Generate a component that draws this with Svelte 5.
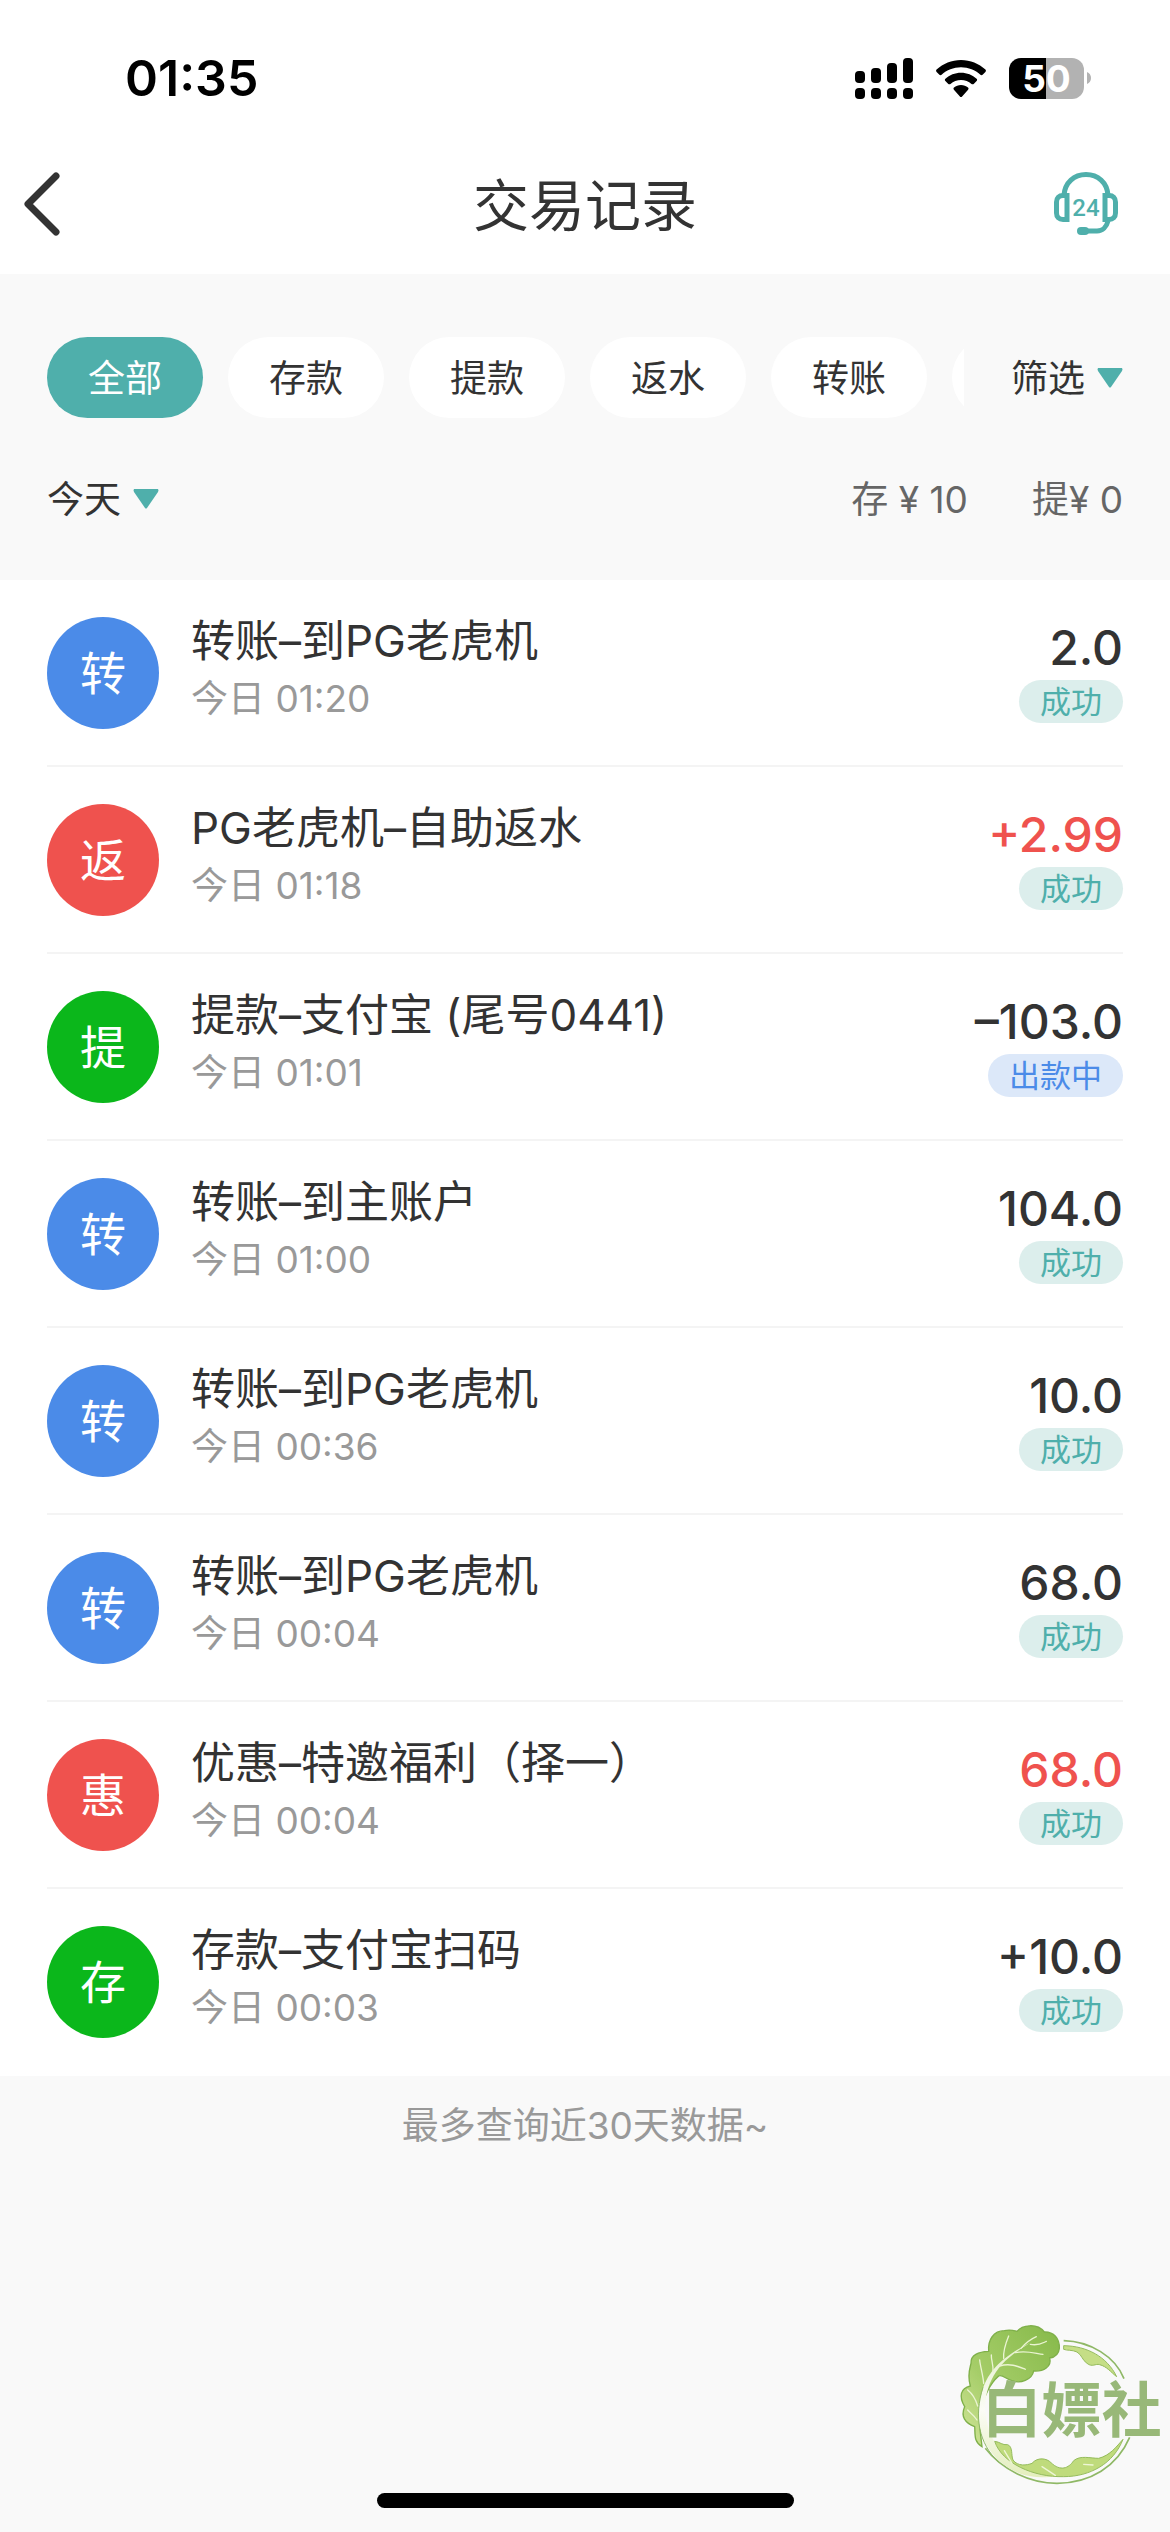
<script>
  const tabs = ["全部", "存款", "提款", "返水", "转账"];
  let activeTab = "全部";

  const records = [
    { icon: "转", color: "blue", title: "转账–到PG老虎机", time: "今日 01:20", amount: "2.0", status: "成功" },
    { icon: "返", color: "red", title: "PG老虎机–自助返水", time: "今日 01:18", amount: "+2.99", income: true, status: "成功" },
    { icon: "提", color: "green", title: "提款–支付宝 (尾号0441)", time: "今日 01:01", amount: "–103.0", status: "出款中", pending: true },
    { icon: "转", color: "blue", title: "转账–到主账户", time: "今日 01:00", amount: "104.0", status: "成功" },
    { icon: "转", color: "blue", title: "转账–到PG老虎机", time: "今日 00:36", amount: "10.0", status: "成功" },
    { icon: "转", color: "blue", title: "转账–到PG老虎机", time: "今日 00:04", amount: "68.0", status: "成功" },
    { icon: "惠", color: "red", title: "优惠–特邀福利（择一）", time: "今日 00:04", amount: "68.0", income: true, status: "成功" },
    { icon: "存", color: "green", title: "存款–支付宝扫码", time: "今日 00:03", amount: "+10.0", status: "成功" },
  ];
</script>

<div class="page">
  <header>
    <div class="status-bar">
      <span class="clock">01:35</span>
      <div class="status-icons">
        <svg width="58" height="41" viewBox="0 0 58 41">
          <rect x="0" y="13" width="10" height="12" rx="4" />
          <rect x="16" y="10" width="10" height="15" rx="4" />
          <rect x="32" y="5" width="10" height="20" rx="4" />
          <rect x="48" y="0" width="10" height="25" rx="4" />
          <rect x="0" y="30" width="10" height="11" rx="4" />
          <rect x="16" y="30" width="10" height="11" rx="4" />
          <rect x="32" y="30" width="10" height="11" rx="4" />
          <rect x="48" y="30" width="10" height="11" rx="4" />
        </svg>
        <svg width="50" height="37" viewBox="0 0 50 37">
          <path d="M25 0c9.400 0 17.900 3.600 24.400 9.600.7.600.7 1.600 0 2.300l-2.800 2.800c-.6.600-1.500.6-2.200 0C39.300 10 32.500 7.200 25 7.200S10.700 10 5.600 14.700c-.7.600-1.600.600-2.200 0L.6 11.900c-.7-.7-.7-1.700 0-2.300C7.100 3.600 15.600 0 25 0z" />
          <path d="M25 12.700c6 0 11.500 2.300 15.600 6 .7.700.7 1.600 0 2.300l-2.900 2.900c-.6.600-1.500.6-2.200 0-2.800-2.500-6.500-4-10.500-4s-7.700 1.500-10.500 4c-.7.600-1.600.6-2.200 0L9.400 21c-.7-.7-.7-1.600 0-2.300 4.100-3.700 9.600-6 15.600-6z" />
          <path d="M25 25c2.700 0 5.100.9 7 2.500.7.600.7 1.500.1 2.200l-6 6.700c-.6.700-1.600.7-2.200 0l-6-6.700c-.6-.7-.6-1.600.1-2.200 1.900-1.600 4.300-2.500 7-2.500z" />
        </svg>
        <div class="battery">
          <span class="level">50</span>
          <svg width="4" height="12" viewBox="0 0 4 12"><path d="M0 0c2.500 1 4 3.300 4 6s-1.500 5-4 6z" fill="#b2b2b2" /></svg>
        </div>
      </div>
    </div>

    <nav class="nav-bar">
      <button class="nav-button" aria-label="返回">
        <svg width="36" height="64" viewBox="0 0 36 64" fill="none" stroke="#333" stroke-width="7" stroke-linecap="round" stroke-linejoin="round">
          <path d="M32 4L4 32l28 28" />
        </svg>
      </button>
      <h1>交易记录</h1>
      <button class="nav-button service" aria-label="客服">
        <svg width="64" height="64" viewBox="0 0 64 64" fill="none" stroke="#4fafab" stroke-width="5">
          <path d="M10 23C11 10.500 20 2.500 32 2.500S53 10.500 54 23" />
          <path d="M13 23.500v24H9c-4 0-6.500-2.500-6.500-6.500V30c0-4 2.500-6.500 6.500-6.500z" />
          <path d="M51 23.500v24H55c4 0 6.500-2.500 6.500-6.500V30c0-4-2.500-6.500-6.500-6.500z" />
          <path d="M54 49c-1.500 6-5.500 10-11 10H30" />
          <path d="M27 59h4" stroke-width="8" stroke-linecap="round" />
          <text x="32" y="44" text-anchor="middle" fill="#4fafab" stroke="none">24</text>
        </svg>
      </button>
    </nav>
  </header>

  <section class="filters">
    <div class="filter-row">
      <div class="tabs">
        {#each tabs as tab}
          <button class="tab" class:active={tab === activeTab} on:click={() => (activeTab = tab)}>{tab}</button>
        {/each}
        <button class="tab" aria-label="更多"></button>
      </div>
      <button class="dropdown">
        <span>筛选</span>
        <svg width="26" height="20" viewBox="0 0 26 20"><path d="M1 0h24q1 1 0 3L14 19q-1 1-2 0L1 3Q0 1 1 0z" /></svg>
      </button>
    </div>
    <div class="summary-row">
      <button class="dropdown">
        <span>今天</span>
        <svg width="26" height="20" viewBox="0 0 26 20"><path d="M1 0h24q1 1 0 3L14 19q-1 1-2 0L1 3Q0 1 1 0z" /></svg>
      </button>
      <div class="totals">
        <span>存 ¥ 10</span>
        <span>提¥ 0</span>
      </div>
    </div>
  </section>

  <ul class="records">
    {#each records as record}
      <li>
        <span class="avatar {record.color}">{record.icon}</span>
        <div class="info">
          <p class="title">{record.title}</p>
          <p class="time">{record.time}</p>
        </div>
        <div class="result">
          <span class="amount" class:income={record.income}>{record.amount}</span>
          <span class="badge" class:pending={record.pending}>{record.status}</span>
        </div>
      </li>
    {/each}
  </ul>

  <p class="hint">最多查询近30天数据~</p>

  <svg class="logo" width="210" height="175" viewBox="80 45 630 525">
    <defs>
      <linearGradient id="leaf" x1="1" y1="0" x2="0" y2="1">
        <stop offset="0" stop-color="#86b94a" />
        <stop offset="0.6" stop-color="#a5cd68" />
        <stop offset="1" stop-color="#d3e69a" />
      </linearGradient>
      <linearGradient id="stem" x1="0" y1="0" x2="0" y2="1">
        <stop offset="0" stop-color="#e4efc9" />
        <stop offset="0.500" stop-color="#fbfcf6" />
        <stop offset="1" stop-color="#e3eebc" />
      </linearGradient>
    </defs>
    <path d="M400 122C480 124 555 170 581 236M598 412C560 500 480 549 380 550C300 550 215 510 165 445" fill="none" stroke="#8fb866" stroke-width="5" />
    <path d="M400 137C470 138 530 170 559 230C540 215 530 200 508 194C495 190 486 203 470 190C455 180 455 165 440 156C425 149 410 152 400 148z" fill="#c5de86" stroke="#94bb5c" stroke-width="3" />
    <path d="M155 440C130 425 135 405 133 380C105 370 90 350 103 320C85 290 90 265 120 258C110 225 120 200 122 190C120 165 145 155 175 154C172 120 190 92 222 92C240 88 252 92 260 94C275 75 320 68 342 96C370 95 388 115 387 145C385 165 370 172 358 174C365 200 340 215 310 213C305 240 270 252 245 242C228 238 215 222 205 228C180 250 160 290 150 340C145 380 152 410 155 440z" fill="url(#leaf)" stroke="#7fb04a" stroke-width="4" />
    <path d="M300 128C235 160 180 200 158 265C130 350 145 430 215 490C260 525 310 540 380 528C290 520 210 480 180 400C155 330 160 265 205 205C230 172 265 150 300 128z" fill="url(#stem)" />
    <path d="M158 262C130 350 145 430 205 487" fill="none" stroke="#8fb866" stroke-width="3" />
    <g fill="none" stroke="#eaf4d2" stroke-width="4" stroke-linecap="round">
      <path d="M255 158C290 150 320 162 338 163M272 145C285 130 300 118 318 110M300 133C325 138 335 130 348 124M220 175C218 150 228 125 235 108M208 198C240 188 265 200 285 208M188 215C190 195 182 180 183 165M160 250C158 225 150 200 148 180M142 318C135 295 125 280 112 270M140 360C130 345 120 340 112 330" />
    </g>
    <path d="M193 424C210 426 215 436 232 434C248 440 242 465 248 480C262 500 290 496 305 490C322 470 350 475 362 488C390 515 415 505 430 482C450 465 480 475 505 475C540 466 558 440 578 418C550 490 480 530 400 530C310 532 215 490 193 424z" fill="#bfdb7c" stroke="#94bb5c" stroke-width="3" />
    <path d="M222 452L245 490M335 500L375 526M460 493L488 495" fill="none" stroke="#eef6d6" stroke-width="4" stroke-linecap="round" />
    <text x="424" y="396" text-anchor="middle">白嫖社</text>
  </svg>

  <div class="home-indicator"></div>
</div>

<style>
:global(body) {
  margin: 0;
  background: #f9f9f9;
}

.page {
  min-height: 100vh;
  background: #f9f9f9;
  color: #333;
  font-family: Inter, "Noto Sans CJK SC", sans-serif;
  font-size: 37px;
}

button {
  padding: 0;
  border: none;
  background: none;
  color: inherit;
  font: inherit;
  cursor: pointer;
}

svg {
  display: block;
  flex: none;
}

p,
h1,
ul {
  margin: 0;
  padding: 0;
}

header {
  padding-bottom: 4px;
  background: #fff;
}

.status-bar {
  display: flex;
  align-items: center;
  justify-content: space-between;
  height: 138px;
  padding: 18px 79px 0 125px;
  box-sizing: border-box;
  color: #000;
}

.clock {
  font-size: 50px;
  font-weight: 600;
}

.status-icons {
  display: flex;
  align-items: center;
  gap: 23px;
}

.battery {
  display: flex;
  align-items: center;
  gap: 3px;
}

.level {
  width: 75px;
  height: 41px;
  border-radius: 12px;
  background: linear-gradient(to right, #000 50%, #b2b2b2 50%);
  color: #fff;
  font-size: 37px;
  font-weight: 700;
  line-height: 41px;
  text-align: center;
}

.nav-bar {
  display: grid;
  grid-template-columns: 1fr auto 1fr;
  align-items: center;
  height: 132px;
}

.nav-button {
  margin-left: 24px;
  justify-self: start;
}

.nav-button.service {
  margin-right: 52px;
  justify-self: end;
}

.nav-button text {
  font-family: Roboto, sans-serif;
  font-size: 24px;
  font-weight: 500;
}

h1 {
  padding-top: 4px;
  font-size: 56px;
  font-weight: 400;
  line-height: 80px;
}

.filters {
  padding: 63px 47px 0;
  height: 306px;
  box-sizing: border-box;
}

.filter-row,
.summary-row {
  display: flex;
  align-items: center;
  justify-content: space-between;
}

.filter-row {
  gap: 47px;
}

.tabs {
  display: flex;
  flex: 1;
  gap: 25px;
  overflow: hidden;
}

.tab {
  flex: none;
  width: 156px;
  height: 81px;
  padding-bottom: 4px;
  border-radius: 41px;
  background: #fff;
}

.tab.active {
  background: #4fafab;
  color: #fff;
}

.dropdown {
  display: flex;
  align-items: center;
  gap: 12px;
}

.dropdown span,
.totals {
  padding-bottom: 4px;
}

.dropdown path {
  fill: #4fafab;
}

.summary-row {
  margin-top: 52px;
}

.totals {
  display: flex;
  gap: 64px;
  color: #666;
}

.records {
  padding: 0 47px;
  background: #fff;
  list-style: none;
}

.records li {
  display: flex;
  align-items: center;
  height: 187px;
  border-bottom: 2px solid #f4f4f4;
  box-sizing: border-box;
}

.records li:last-child {
  border-bottom-color: transparent;
}

.avatar {
  width: 112px;
  height: 112px;
  border-radius: 50%;
  color: #fff;
  font-size: 46px;
  line-height: 112px;
  text-align: center;
}

.blue {
  background: #4b8be8;
}

.red {
  background: #ef524e;
}

.green {
  background: #0bb71b;
}

.info {
  flex: 1;
  margin-left: 32px;
  padding-bottom: 5px;
}

.title {
  font-size: 44px;
  line-height: 58px;
}

.time {
  color: #999;
  line-height: 58px;
}

.result {
  display: flex;
  flex-direction: column;
  align-items: flex-end;
  gap: 6px;
}

.amount {
  font-size: 48px;
  font-weight: 500;
  line-height: 52px;
}

.amount.income {
  color: #ef524e;
}

.badge {
  padding: 0 21px;
  border-radius: 22px;
  background: #dceeec;
  color: #4fafab;
  font-size: 31px;
  line-height: 43px;
}

.badge.pending {
  background: #dce8f9;
  color: #4b8be8;
}

.hint {
  padding-top: 22px;
  color: #999;
  line-height: 56px;
  text-align: center;
}

.logo {
  position: fixed;
  right: 3px;
  bottom: 42px;
}

.logo text {
  fill: #98b878;
  font-size: 180px;
  font-weight: 700;
}

.home-indicator {
  position: fixed;
  bottom: 24px;
  left: 50%;
  width: 417px;
  height: 15px;
  margin-left: -208px;
  border-radius: 8px;
  background: #000;
}
</style>
